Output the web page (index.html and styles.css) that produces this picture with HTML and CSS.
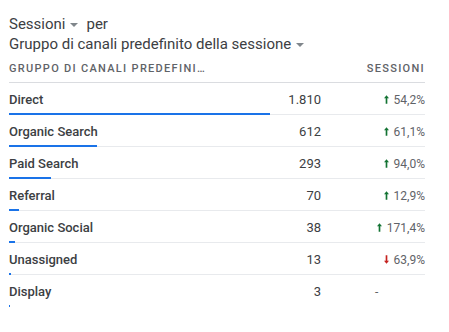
FILE: index.html
```html
<!DOCTYPE html>
<html lang="it">
<head>
<meta charset="utf-8">
<title>Sessioni per gruppo di canali</title>
<link rel="stylesheet" href="styles.css">
</head>
<body>
<div class="card">
  <div class="title">
    <div class="title-line"><span>Sessioni</span><span class="caret"></span><span class="per">per</span></div>
    <div class="title-line"><span>Gruppo di canali predefinito della sessione</span><span class="caret"></span></div>
  </div>
  <div class="head">
    <span class="head-label">Gruppo di canali predefini…</span>
    <span class="head-metric">Sessioni</span>
  </div>
  <div class="rows">
    <div class="row">
      <span class="label">Direct</span><span class="value">1.810</span>
      <span class="change up"><svg class="arrow" viewBox="0 0 6 10"><path d="M3 0 L6 3.6 H4 V10 H2 V3.6 H0 Z"/></svg>54,2%</span>
      <div class="bar" style="width:261px"></div>
    </div>
    <div class="row">
      <span class="label">Organic Search</span><span class="value">612</span>
      <span class="change up"><svg class="arrow" viewBox="0 0 6 10"><path d="M3 0 L6 3.6 H4 V10 H2 V3.6 H0 Z"/></svg>61,1%</span>
      <div class="bar" style="width:88px"></div>
    </div>
    <div class="row">
      <span class="label">Paid Search</span><span class="value">293</span>
      <span class="change up"><svg class="arrow" viewBox="0 0 6 10"><path d="M3 0 L6 3.6 H4 V10 H2 V3.6 H0 Z"/></svg>94,0%</span>
      <div class="bar" style="width:42px"></div>
    </div>
    <div class="row">
      <span class="label">Referral</span><span class="value">70</span>
      <span class="change up"><svg class="arrow" viewBox="0 0 6 10"><path d="M3 0 L6 3.6 H4 V10 H2 V3.6 H0 Z"/></svg>12,9%</span>
      <div class="bar" style="width:10px"></div>
    </div>
    <div class="row">
      <span class="label">Organic Social</span><span class="value">38</span>
      <span class="change up"><svg class="arrow" viewBox="0 0 6 10"><path d="M3 0 L6 3.6 H4 V10 H2 V3.6 H0 Z"/></svg>171,4%</span>
      <div class="bar" style="width:5.5px"></div>
    </div>
    <div class="row">
      <span class="label">Unassigned</span><span class="value">13</span>
      <span class="change down"><svg class="arrow" viewBox="0 0 6 10"><path d="M3 10 L6 6.4 H4 V0 H2 V6.4 H0 Z"/></svg>63,9%</span>
      <div class="bar" style="width:1.9px"></div>
    </div>
    <div class="row last">
      <span class="label">Display</span><span class="value">3</span>
      <span class="change none">-</span>
      <div class="bar" style="width:0.45px"></div>
    </div>
  </div>
</div>
</body>
</html>
```
FILE: styles.css
```css
html, body {
  margin: 0;
  padding: 0;
  background: #ffffff;
}

body {
  font-family: Roboto, "Liberation Sans", Arial, sans-serif;
  color: #3c4043;
}

.card {
  width: 416px;
  padding: 14px 0 0 9px;
}

.title {
  display: flex;
  flex-direction: column;
}

.title-line {
  display: flex;
  align-items: center;
  font-size: 15px;
  line-height: 20px;
  height: 20px;
}

.caret {
  width: 0;
  height: 0;
  margin-left: 5px;
  margin-top: 1px;
  border-left: 4px solid transparent;
  border-right: 4px solid transparent;
  border-top: 4px solid #80868b;
}

.per {
  margin-left: 8px;
}

.head {
  display: flex;
  justify-content: space-between;
  align-items: center;
  height: 28px;
  border-bottom: 1px solid #dadce0;
  font-size: 11px;
  font-weight: 500;
  letter-spacing: 1.3px;
  text-transform: uppercase;
  color: #5f6368;
}

.row {
  display: grid;
  grid-template-columns: 1fr 80px 104px;
  padding-top: 8px;
  border-bottom: 1px solid #e8eaed;
}

.row.last {
  border-bottom-color: transparent;
}

.label {
  font-size: 13px;
  font-weight: 500;
  line-height: 18px;
}

.value {
  font-size: 13px;
  line-height: 18px;
  text-align: right;
}

.change {
  display: flex;
  justify-content: flex-end;
  align-items: center;
  gap: 5px;
  font-size: 12px;
  line-height: 18px;
  color: #5f6368;
}

.change.none {
  justify-content: flex-start;
  padding-left: 54px;
}

.arrow {
  width: 5px;
  height: 9px;
  margin-top: -1px;
}

.up .arrow {
  fill: #137333;
}

.down .arrow {
  fill: #c5221f;
}

/* share-of-total bar, drawn over the row's bottom rule */
.bar {
  grid-column: 1 / -1;
  height: 2px;
  margin-top: 4px;
  margin-bottom: -1px;
  background: #1a73e8;
}
```
